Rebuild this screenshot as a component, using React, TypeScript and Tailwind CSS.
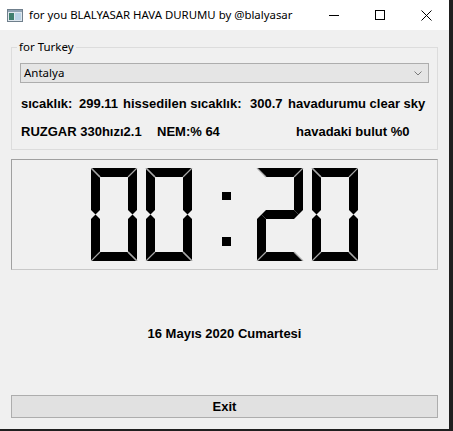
import React from "react"

// segment layout of one LCD digit: a b c d e f g
const DIGITS: Record<string, string> = {
  "0": "abcdef",
  "2": "abdeg",
}

const W = 46
const H = 93
const T = 9
const M = H / 2

const SEGMENTS: Record<string, number[][]> = {
  a: [[0, 0], [W, 0], [W - T, T], [T, T]],
  b: [[W, 0], [W, M - T / 2], [W - T / 2, M], [W - T, M - T / 2], [W - T, T]],
  c: [[W, M + T / 2], [W, H], [W - T, H - T], [W - T, M + T / 2], [W - T / 2, M]],
  d: [[0, H], [W, H], [W - T, H - T], [T, H - T]],
  e: [[0, M + T / 2], [0, H], [T, H - T], [T, M + T / 2], [T / 2, M]],
  f: [[0, 0], [0, M - T / 2], [T / 2, M], [T, M - T / 2], [T, T]],
  g: [[T / 2, M], [T, M - T / 2], [W - T, M - T / 2], [W - T / 2, M], [W - T, M + T / 2], [T, M + T / 2]],
}

// corner joins, drawn as thin grey bevels when both sides are lit
const JOINS: { on: string; line: number[] }[] = [
  { on: "af", line: [0, 0, T, T] },
  { on: "ab", line: [W, 0, W - T, T] },
  { on: "de", line: [0, H, T, H - T] },
  { on: "cd", line: [W, H, W - T, H - T] },
  { on: "a", line: [0, 0, T, T] },
  { on: "d", line: [W, H, W - T, H - T] },
]

const LcdDigit: React.FC<{ ch: string; x: number }> = ({ ch, x }) => {
  const lit = DIGITS[ch] ?? ""
  return (
    <g transform={`translate(${x},0)`}>
      {lit.split("").map((s) => (
        <polygon key={s} points={SEGMENTS[s].map((p) => p.join(",")).join(" ")} fill="#000" />
      ))}
      {JOINS.filter((j) => j.on.split("").every((s) => lit.includes(s))).map((j, i) => (
        <line
          key={i}
          x1={j.line[0]}
          y1={j.line[1]}
          x2={j.line[2]}
          y2={j.line[3]}
          stroke="#a8a8a8"
          strokeWidth={1.2}
        />
      ))}
    </g>
  )
}

const AppIcon = () => (
  <svg width="16" height="13" viewBox="0 0 16 13">
    <rect x="0.5" y="0.5" width="15" height="12" fill="#dfe7ee" stroke="#6f7f8c" />
    <rect x="1" y="1" width="14" height="2" fill="#8fa3b3" />
    <rect x="2" y="4" width="5" height="7" fill="#3f7f6e" />
    <rect x="8" y="4" width="6" height="7" fill="#b9d3e6" />
  </svg>
)

export default function App() {
  return (
    <div className="w-[453px] h-[431px] bg-[#1f1f1f]">
      <div className="w-[449px] h-[429px] flex flex-col bg-[#f0f0f0] font-['Liberation_Sans',Arial,sans-serif] text-black">
        {/* title bar */}
        <div className="h-[30px] bg-white flex items-center shrink-0">
          <div className="pl-[7px] pr-[6px] flex items-center">
            <AppIcon />
          </div>
          <span className="text-[11.4px] font-['Noto_Sans',sans-serif] text-black leading-none">
            for you BLALYASAR HAVA DURUMU by @blalyasar
          </span>
          <div className="ml-auto flex h-full">
            <div className="w-[46px] flex items-center justify-center">
              <div className="w-[10px] h-px bg-black" />
            </div>
            <div className="w-[46px] flex items-center justify-center">
              <div className="w-[10px] h-[10px] border border-black" />
            </div>
            <div className="w-[46px] flex items-center justify-center">
              <svg width="11" height="11" viewBox="0 0 11 11">
                <path d="M0.5 0.5 L10.5 10.5 M10.5 0.5 L0.5 10.5" stroke="#000" strokeWidth="1" />
              </svg>
            </div>
          </div>
        </div>

        <div className="flex flex-col px-[11px]">
          {/* group box */}
          <fieldset className="mt-[10px] border border-[#dcdcdc] px-[8px] pb-[11px]">
            <legend className="ml-[-3px] px-[2px] text-[11.5px] leading-[14px] font-['Noto_Sans',sans-serif]">
              for Turkey
            </legend>
            <div className="mt-[9px] h-[20px] border border-[#adadad] bg-[#e5e5e5] flex items-center pl-[3px] pr-[6px]">
              <span className="text-[11.5px] leading-none font-['Noto_Sans',sans-serif]">Antalya</span>
              <svg className="ml-auto" width="8" height="5" viewBox="0 0 8 5">
                <path d="M0.5 0.5 L4 4 L7.5 0.5" fill="none" stroke="#7a7a7a" strokeWidth="1" />
              </svg>
            </div>
            <div className="mt-[13px] h-[14px] flex items-center text-[13px] font-bold whitespace-pre leading-none">
              <span className="ml-[1px] w-[58px]">sıcaklık:</span>
              <span className="w-[44px]">299.11</span>
              <span className="w-[127px]">hissedilen sıcaklık:</span>
              <span className="w-[38px]">300.7</span>
              <span>havadurumu clear sky</span>
            </div>
            <div className="mt-[14px] h-[14px] flex items-center text-[13px] font-bold whitespace-pre leading-none">
              <span className="ml-[1px] w-[136px]">RUZGAR 330hızı2.1</span>
              <span className="w-[139px]">NEM:% 64</span>
              <span>havadaki bulut %0</span>
            </div>
          </fieldset>

          {/* lcd clock */}
          <div className="mt-[9px] h-[111px] border border-[#a0a0a0] border-r-[#c8c8c8] border-b-[#c8c8c8] flex justify-center pt-[8px]">
            <svg width="267" height="93" viewBox="0 0 267 93">
              <LcdDigit ch="0" x={0} />
              <LcdDigit ch="0" x={55} />
              <rect x="131" y="24" width="9" height="8" fill="#000" />
              <rect x="131" y="69" width="9" height="9" fill="#000" />
              <LcdDigit ch="2" x={166} />
              <LcdDigit ch="0" x={221} />
            </svg>
          </div>

          <div className="mt-[56px] h-[14px] flex justify-center items-center text-[13px] font-bold leading-none">
            16 Mayıs 2020 Cumartesi
          </div>

          <button className="mt-[55px] h-[23px] border border-[#adadad] bg-[#e1e1e1] flex items-center justify-center text-[13px] font-bold leading-none">
            Exit
          </button>
        </div>
      </div>
    </div>
  )
}
